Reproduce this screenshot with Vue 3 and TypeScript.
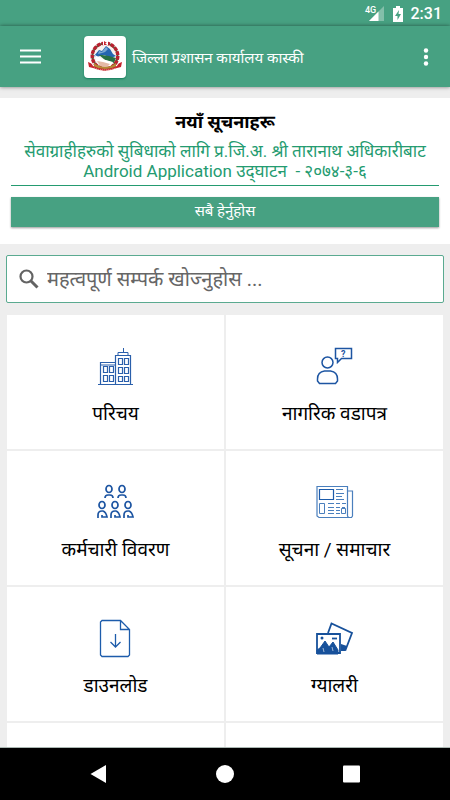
<script setup lang="ts">
import { ref } from 'vue'

type IconName = 'building' | 'help' | 'people' | 'news' | 'download' | 'gallery'

interface Tile {
  icon: IconName
  label: string
}

const tiles: Tile[] = [
  { icon: 'building', label: 'परिचय' },
  { icon: 'help', label: 'नागरिक वडापत्र' },
  { icon: 'people', label: 'कर्मचारी विवरण' },
  { icon: 'news', label: 'सूचना / समाचार' },
  { icon: 'download', label: 'डाउनलोड' },
  { icon: 'gallery', label: 'ग्यालरी' },
]

const people = [
  { x: 12, y: 6 },
  { x: 25, y: 6 },
  { x: 5, y: 22 },
  { x: 18, y: 22 },
  { x: 31, y: 22 },
]

const query = ref('')
</script>

<template>
  <div class="screen">
    <div class="status">
      <svg class="signal" viewBox="0 0 20 16" width="20" height="16" aria-hidden="true">
        <path d="M19 0v15H4z" fill="#83bfaa" />
        <path d="M13.500 5.500V15H4z" fill="#fff" />
        <text x="0" y="7" class="net">4G</text>
      </svg>
      <svg viewBox="0 0 10 16" width="10" height="16" aria-hidden="true">
        <path d="M3 0h4v2h3v14H0V2h3z" fill="#fff" />
        <path d="M6 4 2 10h2.500v4L8 8H5.500z" fill="#47a182" />
      </svg>
      <span class="time">2:31</span>
    </div>

    <header class="toolbar">
      <button class="icon-btn" type="button" aria-label="Menu">
        <svg viewBox="0 0 21 15" width="21" height="15">
          <path d="M0 1.500h21M0 7.500h21M0 13.500h21" stroke="#fff" stroke-width="2.200" />
        </svg>
      </button>
      <div class="logo">
        <svg viewBox="0 0 36 32" width="36" height="32" aria-hidden="true">
          <circle cx="18" cy="15" r="11.500" fill="#f8f3ee" />
          <path d="M7 15 12 9l3 1 4-5 4 3 3 5 3 2-5 2-7-3-8 2z" fill="#2566b0" />
          <path d="m12 10 3 1 4-5 2 2-3 3-3 1-4 1z" fill="#7da9d4" />
          <path d="m15 14 7 1 7 2-2 5-9-3-6-5z" fill="#287044" />
          <path d="m8 14 7 4 11 3-2 4-8-1-7-4z" fill="#fff" />
          <path d="m10 20 6 1 7 2-3 3h-6z" fill="#e5b9a6" />
          <circle cx="18" cy="15" r="12.500" fill="none" stroke="#47643c" stroke-width="2" />
          <circle cx="18" cy="15" r="12.800" fill="none" stroke="#b9202f" stroke-width="3.400" stroke-dasharray="3.700 1" />
          <path d="M7 22q11 8 22 0v4q-11 6-22 0z" fill="#b48a37" />
          <path d="M1 21q4 1 5 4 12 6 24 0 1-3 5-4l-1 5-4 1q-12 5-24 0l-4-1z" fill="#c5242e" />
          <path d="M7 27q11 4 22 0" fill="none" stroke="#efb8a7" stroke-width="1" stroke-dasharray="1 1" />
          <path d="M16 0h5v4h-5z" fill="#fff" />
          <path d="m17 0 3 2h-2l2 2h-3z" fill="#c5242e" />
        </svg>
      </div>
      <h1 class="title">जिल्ला प्रशासन कार्यालय कास्की</h1>
      <button class="icon-btn" type="button" aria-label="More">
        <svg viewBox="0 0 6 20" width="6" height="20" fill="#fff">
          <circle cx="3" cy="3.500" r="2.200" />
          <circle cx="3" cy="10" r="2.200" />
          <circle cx="3" cy="16.500" r="2.200" />
        </svg>
      </button>
    </header>

    <main class="content">
      <section class="notice">
        <h2>नयाँ सूचनाहरू</h2>
        <a class="headline" href="#">सेवाग्राहीहरुको सुबिधाको लागि प्र.जि.अ. श्री तारानाथ अधिकारीबाट Android Application उद्&zwnj;घाटन &nbsp;- २०७४-३-६</a>
        <button class="all" type="button">सबै हेर्नुहोस</button>
      </section>

      <label class="search">
        <svg viewBox="0 0 20 20" width="20" height="20" fill="none" stroke="#636363" aria-hidden="true">
          <circle cx="7.500" cy="7.500" r="6" stroke-width="2.200" />
          <path d="m12 12 6.500 6.500" stroke-width="3" />
        </svg>
        <input v-model="query" type="text" placeholder="महत्वपूर्ण सम्पर्क खोज्नुहोस ..." aria-label="महत्वपूर्ण सम्पर्क खोज्नुहोस" />
      </label>

      <nav class="grid">
        <button v-for="tile in tiles" :key="tile.icon" class="tile" type="button">
          <svg v-if="tile.icon === 'building'" class="glyph" viewBox="-1 0 38 40" fill="none" stroke="#2a5fab">
            <path d="M2.500 37V15.500H17M17.500 37V8.500h15V37M0 37.500h35" stroke-width="1.200" />
            <path d="M20 8V5.500h10V8M25.500 5.500V1M2.500 18H17" />
            <path d="M5.500 19.500h4v6h-4zM11.500 19.500h4v6h-4zM5.500 28.500h4v6h-4zM11.500 28.500h4v6h-4zM20.500 11.500h4v6h-4zM26.500 11.500h4v6h-4zM20.500 20.500h4v6h-4zM26.500 20.500h4v6h-4zM20.500 29.500h4v5h-4zM26.500 29.500h4v5h-4z" stroke-width="1.200" />
          </svg>
          <svg v-else-if="tile.icon === 'help'" class="glyph" viewBox="0 0 38 40" fill="none" stroke="#1d55a2" stroke-width="1.500">
            <circle cx="11.500" cy="15.500" r="5.500" />
            <path d="M1.500 34v-2q0-7 7-8h6q7 1 7 8v2l-2 2.500h-16zM19.500 1.500h16v10H25.500l-4 4v-4h-2z" />
            <text x="25" y="10" class="mark">?</text>
          </svg>
          <svg v-else-if="tile.icon === 'people'" class="glyph" viewBox="0 0 38 40" fill="none" stroke="#1d55a2" stroke-width="1.700">
            <g v-for="(person, index) in people" :key="index">
              <ellipse :cx="person.x" :cy="person.y" rx="3" ry="3.500" />
              <path v-if="index < 2" :d="`M${person.x - 4} ${person.y + 9}q0-3 3-3h2q3 0 3 3`" />
              <path v-else :d="`M${person.x - 4} ${person.y + 13}v-3q0-4 4-4h1q3 1 4 6h-5v-2`" />
            </g>
          </svg>
          <svg v-else-if="tile.icon === 'news'" class="glyph" viewBox="0 0 38 40" fill="none" stroke="#4a7fbd">
            <path d="M1 3.500h30.500V33l1 1.500H3L1 33zM31.500 8h5v25l-1 1.500h-3" stroke-width="1.200" />
            <path d="M3.500 6.500h14v10h-14z" stroke="#1d5cab" stroke-width="1.200" />
            <path d="M20 6.500h7M20 10.500h8M20 13.500h6M20 16.500h8M12 20.500h6M12 24.500h6M12 27.500h6M12 30.500h6M20 20.500h4M26 20.500h4M20 24.500h4M26 24.500h3M20 27.500h4M20 30.500h4" stroke-width="1.200" />
            <path d="M3.500 20.500h5v10h-5zM25.500 25.500h4v5h-4z" />
          </svg>
          <svg v-else-if="tile.icon === 'download'" class="glyph" viewBox="-3 0 38 40" fill="none" stroke="#1d5cab" stroke-width="1.300">
            <path d="M3 1.500h17.500l9 9V36L28 37.500H2L0.500 36V3L2 1.500zM20.500 1.500v9h9M15.500 15v12.500M10.500 23l5 5 5-5" />
          </svg>
          <svg v-else class="glyph" viewBox="0 0 38 40" fill="none" stroke="#17519b" stroke-width="1.800">
            <path d="M12 14 15.500 4.500 36 14 29.500 31l-4-1" />
            <path d="m25 25 6 2-2 5h-4z" fill="#17519b" stroke="none" />
            <path d="M1 15h23v19H1z" fill="#fff" />
            <path d="m1 31 3-2 5-7 4 6 4-5 5 8v4H1z" fill="#17519b" stroke-width="1" />
            <path d="m7 29 1 4M16 28l1 4" stroke="#fff" stroke-width="0.600" />
            <path d="M16 19.500h5" />
            <circle cx="6" cy="19" r="1.500" fill="#17519b" stroke="none" />
          </svg>
          <span>{{ tile.label }}</span>
        </button>
        <div class="tile" />
        <div class="tile" />
      </nav>
    </main>

    <footer class="system">
      <button type="button" aria-label="Back">
        <svg viewBox="0 0 18 18" width="18" height="18" fill="#fff"><path d="M17 0v18L1.500 9z" /></svg>
      </button>
      <button type="button" aria-label="Home">
        <svg viewBox="0 0 18 18" width="18" height="18" fill="#fff"><circle cx="9" cy="9" r="9" /></svg>
      </button>
      <button type="button" aria-label="Recent">
        <svg viewBox="0 0 18 18" width="18" height="18" fill="#fff"><rect x="0" y="0.500" width="17" height="17" rx="1" /></svg>
      </button>
    </footer>
  </div>
</template>

<style>
body {
  background: #eee;
}
</style>

<style scoped>
.screen {
  display: flex;
  flex-direction: column;
  height: 100vh;
  overflow: hidden;
  background: #eee;
  color: #000;
  font-family: Roboto, "Noto Sans Devanagari", "Noto Sans", sans-serif;
}
.screen * {
  box-sizing: border-box;
}
button {
  margin: 0;
  padding: 0;
  border: 0;
  background: none;
  color: inherit;
  font: inherit;
}
svg {
  display: block;
}
h1,
h2 {
  margin: 0;
}
.status {
  display: flex;
  flex: none;
  align-items: center;
  justify-content: flex-end;
  gap: 8px;
  height: 26px;
  padding: 2px 8px 0;
  background: #47a182;
  color: #fff;
}
.signal {
  overflow: visible;
}
.net {
  fill: #fff;
  font-size: 9px;
  font-weight: 500;
}
.time {
  font-size: 16px;
  font-weight: 500;
  line-height: 24px;
}
.toolbar {
  display: flex;
  flex: none;
  align-items: center;
  height: 61px;
  padding: 0 12px;
  background: #47a182;
  color: #fff;
  box-shadow: 0 0 4px rgba(0, 0, 0, 0.5);
}
.icon-btn {
  display: grid;
  place-items: center;
  width: 24px;
  height: 40px;
}
.toolbar .icon-btn:first-child {
  width: 36px;
}
.logo {
  display: grid;
  place-items: center;
  width: 42px;
  height: 42px;
  margin-left: 36px;
  border-radius: 4px;
  background: #fff;
  box-shadow: 0 1px 2px rgba(0, 110, 75, 0.7);
}
.title {
  flex: 1;
  padding: 2px 0 0 6px;
  font-size: 15px;
  font-weight: 400;
  line-height: 24px;
  white-space: nowrap;
}
.content {
  flex: 1;
  min-height: 0;
  padding-top: 11px;
  overflow: hidden;
}
.notice {
  padding: 12px 11px 17px;
  background: #fff;
  text-align: center;
}
.notice h2 {
  font-size: 18px;
  font-weight: 700;
  line-height: 24px;
}
.headline {
  display: block;
  padding: 7px 0 4px;
  border-bottom: 1px solid #249b70;
  color: #249b70;
  font-size: 17px;
  line-height: 20px;
  text-decoration: none;
}
.all {
  display: block;
  width: 100%;
  height: 30px;
  margin-top: 11px;
  background: #47a182;
  box-shadow: 0 1px 2px rgba(0, 0, 0, 0.4);
  color: #fff;
  font-size: 15px;
}
.search {
  display: flex;
  align-items: center;
  gap: 8px;
  height: 48px;
  margin: 11px 6px 12px;
  padding: 0 12px;
  border: 1px solid #5aaa90;
  border-radius: 2px;
  background: #fff;
}
.search input {
  flex: 1;
  min-width: 0;
  height: 40px;
  padding: 0;
  border: 0;
  outline: 0;
  background: none;
  color: #333;
  font: inherit;
  font-size: 20px;
}
.search input::placeholder {
  color: #666;
  opacity: 1;
}
.grid {
  display: grid;
  grid-template-columns: 1fr 1fr;
  grid-auto-rows: 134px;
  gap: 2px;
  padding: 0 7px;
}
.tile {
  display: flex;
  flex-direction: column;
  align-items: center;
  gap: 13px;
  padding-top: 32px;
  background: #fff;
  font-size: 19px;
  line-height: 28px;
}
.glyph {
  width: 38px;
  height: 40px;
}
.mark {
  fill: #1d55a2;
  stroke: none;
  font-size: 9px;
  font-weight: 700;
}
.system {
  display: flex;
  flex: none;
  align-items: center;
  justify-content: space-around;
  height: 53px;
  padding: 0 35px;
  border-top: 1px solid #aab7b2;
  background: #000;
}
</style>
